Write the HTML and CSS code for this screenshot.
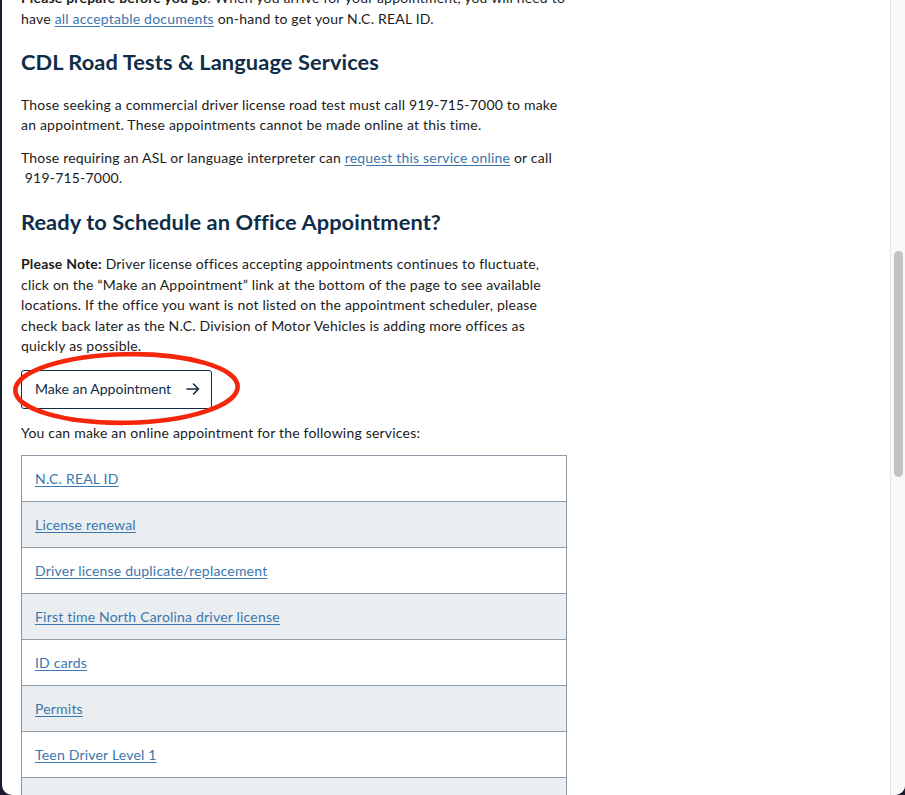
FILE: index.html
```html
<!DOCTYPE html>
<html lang="en">
<head>
<meta charset="utf-8">
<title>Appointments</title>
<link rel="stylesheet" href="styles.css">
</head>
<body>
<div class="window">
  <main class="page">
    <div class="content">
      <p><strong>Please prepare before you go</strong>: When you arrive for your appointment, you will need to have <a href="#">all acceptable documents</a> on-hand to get your N.C. REAL ID.</p>

      <h2>CDL Road Tests &amp; Language Services</h2>
      <p>Those seeking a commercial driver license road test must call 919-715-7000 to make an appointment. These appointments cannot be made online at this time.</p>
      <p>Those requiring an ASL or language interpreter can <a href="#">request this service online</a> or call &nbsp;919-715-7000.</p>

      <h2>Ready to Schedule an Office Appointment?</h2>
      <p><strong>Please Note:</strong> Driver license offices accepting appointments continues to fluctuate, click on the “Make an Appointment” link at the bottom of the page to see available locations. If the office you want is not listed on the appointment scheduler, please check back later as the N.C. Division of Motor Vehicles is adding more offices as quickly as possible.</p>

      <div class="cta">
        <a class="btn" href="#">Make an Appointment
          <svg class="arrow" width="14" height="14" viewBox="0 0 14 14" aria-hidden="true"><path d="M1 7H12.5M7.5 2L12.5 7L7.5 12" fill="none" stroke="currentColor" stroke-width="1.6" stroke-linecap="round" stroke-linejoin="round"/></svg>
        </a>
        <svg class="circle" width="240" height="84" viewBox="0 0 240 84" aria-hidden="true"><ellipse cx="116.5" cy="40.5" rx="111.2" ry="34.3" fill="none" stroke="#f4260c" stroke-width="4.6" transform="rotate(-1 116.5 40.5)"/></svg>
      </div>

      <p class="lead">You can make an online appointment for the following services:</p>

      <table class="services">
        <tr><td><a href="#">N.C. REAL ID</a></td></tr>
        <tr><td><a href="#">License renewal</a></td></tr>
        <tr><td><a href="#">Driver license duplicate/replacement</a></td></tr>
        <tr><td><a href="#">First time North Carolina driver license</a></td></tr>
        <tr><td><a href="#">ID cards</a></td></tr>
        <tr><td><a href="#">Permits</a></td></tr>
        <tr><td><a href="#">Teen Driver Level 1</a></td></tr>
        <tr><td><a href="#">Teen Driver Level 2</a></td></tr>
      </table>
    </div>
  </main>
  <div class="scrollbar"><div class="thumb"></div></div>
</div>
</body>
</html>
```

FILE: styles.css
```css
html {
  background: #1d1b30;
}
body {
  margin: 0;
  height: 795px;
  overflow: hidden;
  font-family: Lato, "Open Sans", sans-serif;
  font-size: 14px;
  line-height: 20.5px;
  letter-spacing: 0.2px;
  color: #1b1b1b;
}
.window {
  margin-left: 2px;
  height: 795px;
  background: #fff;
  border-radius: 0 0 10px 10px;
  overflow: hidden;
  display: flex;
}
.page {
  flex: 1;
  overflow: hidden;
}
.content {
  width: 546px;
  margin: -11.75px 0 0 19px;
}
p {
  margin: 0 0 12px;
}
strong {
  font-weight: 700;
}
a {
  color: #3b76ad;
  text-decoration: underline;
  text-underline-offset: 2px;
}
h2 {
  margin: 18.75px 0 18.75px;
  font-size: 21.8px;
  line-height: 28px;
  font-weight: 700;
  color: #0f2d48;
  letter-spacing: 0.1px;
}
.cta {
  position: relative;
  margin: 13px 0 14px;
  height: 39px;
}
.btn {
  box-sizing: border-box;
  display: inline-flex;
  align-items: center;
  height: 39px;
  width: 191px;
  padding: 0 11px 0 13px;
  border: 1px solid #0f2d48;
  border-radius: 3px;
  color: #0f2d48;
  text-decoration: none;
  letter-spacing: 0;
  justify-content: space-between;
}
.arrow {
  color: #0f2d48;
}
.circle {
  position: absolute;
  left: -11px;
  top: -22px;
  pointer-events: none;
}
.lead {
  margin-bottom: 12px;
}
.services {
  width: 546px;
  border-collapse: collapse;
  border: 1px solid #8f9ba6;
}
.services td {
  height: 45px;
  padding: 0 13px;
  border-top: 1px solid #8f9ba6;
  vertical-align: middle;
}
.services tr:nth-child(even) td {
  background: #eaeef1;
}
.scrollbar {
  width: 14px;
  background: #f9f9f9;
  border-left: 1px solid #e4e4e4;
  padding-top: 251px;
  display: flex;
  justify-content: center;
}
.thumb {
  width: 9px;
  height: 226px;
  border-radius: 5px;
  background: #c2c2c2;
}
```
